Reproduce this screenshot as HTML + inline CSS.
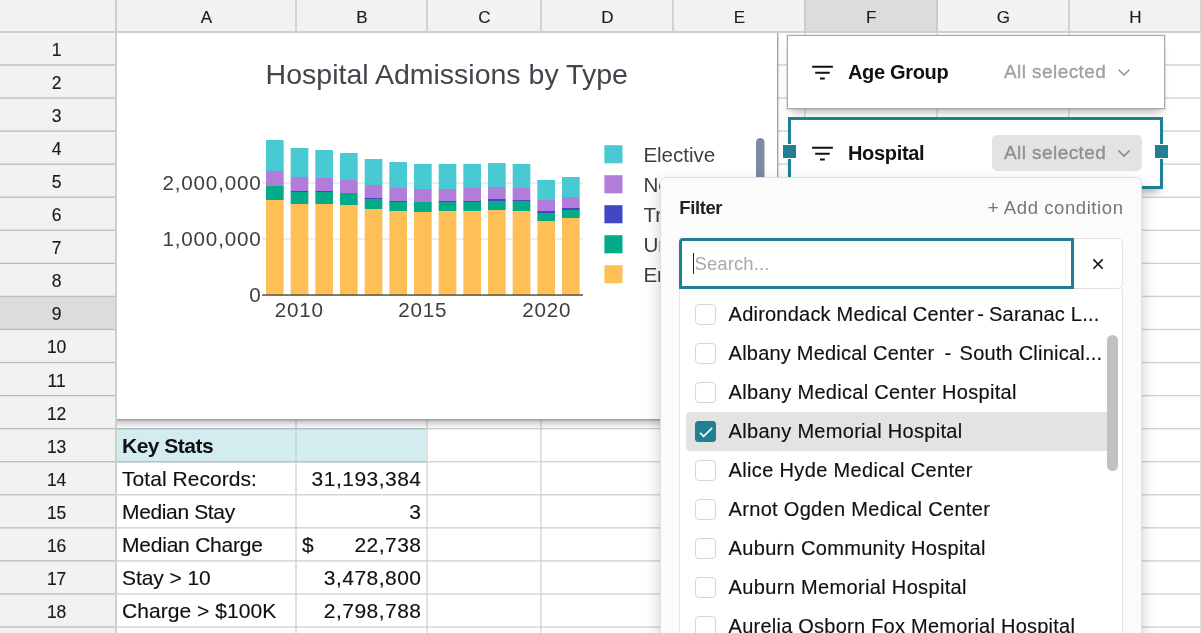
<!DOCTYPE html>
<html><head><meta charset="utf-8"><title>Hospital Admissions</title>
<style>
*{box-sizing:border-box;margin:0;padding:0}
html,body{width:1201px;height:633px;overflow:hidden;background:#fff;font-family:"Liberation Sans",sans-serif;color:#111}
#app{position:relative;width:1201px;height:633px;overflow:hidden;will-change:transform}
.t{position:absolute;white-space:pre;line-height:40px}
.vl{position:absolute;top:0;width:2px;height:633px;background:#e1e1e1}
.hl{position:absolute;left:0;height:2px;width:1201px;background:#e1e1e1}
.b{position:absolute}
.cb{position:absolute;left:695px;width:21px;height:21px;border:1px solid #d6d6d6;border-radius:4px;background:#fff}
</style></head><body><div id="app">

<div class="vl" style="left:295px;top:33px"></div>
<div class="vl" style="left:426px;top:33px"></div>
<div class="vl" style="left:540px;top:33px"></div>
<div class="vl" style="left:672px;top:33px"></div>
<div class="vl" style="left:804px;top:33px"></div>
<div class="vl" style="left:936px;top:33px"></div>
<div class="vl" style="left:1068px;top:33px"></div>
<div class="vl" style="left:1200px;top:33px"></div>
<svg class="b" style="left:0;top:0" width="1201" height="633">
<rect x="117" y="64.33" width="1084" height="1.333" fill="#d1d1d1"/>
<rect x="117" y="97.39" width="1084" height="1.333" fill="#d1d1d1"/>
<rect x="117" y="130.45" width="1084" height="1.333" fill="#d1d1d1"/>
<rect x="117" y="163.51" width="1084" height="1.333" fill="#d1d1d1"/>
<rect x="117" y="196.57" width="1084" height="1.333" fill="#d1d1d1"/>
<rect x="117" y="229.63" width="1084" height="1.333" fill="#d1d1d1"/>
<rect x="117" y="262.69" width="1084" height="1.333" fill="#d1d1d1"/>
<rect x="117" y="295.75" width="1084" height="1.333" fill="#d1d1d1"/>
<rect x="117" y="328.81" width="1084" height="1.333" fill="#d1d1d1"/>
<rect x="117" y="361.87" width="1084" height="1.333" fill="#d1d1d1"/>
<rect x="117" y="394.93" width="1084" height="1.333" fill="#d1d1d1"/>
<rect x="117" y="427.99" width="1084" height="1.333" fill="#d1d1d1"/>
<rect x="117" y="461.05" width="1084" height="1.333" fill="#d1d1d1"/>
<rect x="117" y="494.11" width="1084" height="1.333" fill="#d1d1d1"/>
<rect x="117" y="527.17" width="1084" height="1.333" fill="#d1d1d1"/>
<rect x="117" y="560.23" width="1084" height="1.333" fill="#d1d1d1"/>
<rect x="117" y="593.29" width="1084" height="1.333" fill="#d1d1d1"/>
<rect x="117" y="626.35" width="1084" height="1.333" fill="#d1d1d1"/>
</svg>
<svg class="b" style="left:0;top:0" width="1201" height="633"><rect x="117" y="427.99" width="309" height="34.39" fill="#d3ecf0"/><rect x="117" y="427.99" width="309" height="1.333" fill="rgba(0,0,0,.18)"/><rect x="117" y="461.05" width="309" height="1.333" fill="rgba(0,0,0,.18)"/></svg>
<div class="vl" style="left:295px;top:430px;height:31px;background:#c6dde1"></div>
<div class="t" style="left:122px;top:425.76px;font-size:21px;color:#111;-webkit-text-stroke:.15px #111;font-weight:700;-webkit-text-stroke:0;letter-spacing:-0.5px">Key Stats</div>
<div class="t" style="left:122px;top:458.82px;font-size:21px;color:#111;-webkit-text-stroke:.15px #111;letter-spacing:0.05px">Total Records:</div>
<div class="t" style="right:779.5px;top:458.82px;font-size:21px;color:#111;-webkit-text-stroke:.15px #111;letter-spacing:.48px">31,193,384</div>
<div class="t" style="left:122px;top:491.88px;font-size:21px;color:#111;-webkit-text-stroke:.15px #111;letter-spacing:-0.36px">Median Stay</div>
<div class="t" style="right:779.5px;top:491.88px;font-size:21px;color:#111;-webkit-text-stroke:.15px #111;letter-spacing:.48px">3</div>
<div class="t" style="left:122px;top:524.94px;font-size:21px;color:#111;-webkit-text-stroke:.15px #111;letter-spacing:-0.22px">Median Charge</div>
<div class="t" style="right:779.5px;top:524.94px;font-size:21px;color:#111;-webkit-text-stroke:.15px #111;letter-spacing:.48px">22,738</div>
<div class="t" style="left:122px;top:558px;font-size:21px;color:#111;-webkit-text-stroke:.15px #111;letter-spacing:-0.07px">Stay &gt; 10</div>
<div class="t" style="right:779.5px;top:558px;font-size:21px;color:#111;-webkit-text-stroke:.15px #111;letter-spacing:.48px">3,478,800</div>
<div class="t" style="left:122px;top:591.06px;font-size:21px;color:#111;-webkit-text-stroke:.15px #111;letter-spacing:0.05px">Charge &gt; $100K</div>
<div class="t" style="right:779.5px;top:591.06px;font-size:21px;color:#111;-webkit-text-stroke:.15px #111;letter-spacing:.48px">2,798,788</div>
<div class="t" style="left:302px;top:524.94px;font-size:21px;color:#111;-webkit-text-stroke:.15px #111;">$</div>
<div class="b" style="left:105px;top:20px;width:673px;height:400px;background:#fff;border:1px solid #a0a0a0;box-shadow:0 0 0 1px rgba(0,0,0,.1),0 7px 8px -4px rgba(0,0,0,.3)"></div>
<svg class="b" style="left:117px;top:33px" width="660" height="386" viewBox="117 33 660 386">
<rect x="262" y="182" width="321" height="2" fill="#ededed"/><rect x="262" y="238" width="321" height="2" fill="#ededed"/>
<rect x="266.00" y="140" width="17.67" height="31" fill="#49c9d1"/>
<rect x="266.00" y="171" width="17.67" height="15" fill="#b27cdb"/>
<rect x="266.00" y="186" width="17.67" height="14" fill="#03ab88"/>
<rect x="266.00" y="200" width="17.67" height="95" fill="#febf57"/>
<rect x="290.67" y="148" width="17.67" height="29" fill="#49c9d1"/>
<rect x="290.67" y="177" width="17.67" height="14" fill="#b27cdb"/>
<rect x="290.67" y="191" width="17.67" height="1" fill="#4447c4"/>
<rect x="290.67" y="192" width="17.67" height="12" fill="#03ab88"/>
<rect x="290.67" y="204" width="17.67" height="91" fill="#febf57"/>
<rect x="315.33" y="150" width="17.67" height="28" fill="#49c9d1"/>
<rect x="315.33" y="178" width="17.67" height="13" fill="#b27cdb"/>
<rect x="315.33" y="191" width="17.67" height="1" fill="#4447c4"/>
<rect x="315.33" y="192" width="17.67" height="12" fill="#03ab88"/>
<rect x="315.33" y="204" width="17.67" height="91" fill="#febf57"/>
<rect x="340.00" y="153" width="17.67" height="27" fill="#49c9d1"/>
<rect x="340.00" y="180" width="17.67" height="13" fill="#b27cdb"/>
<rect x="340.00" y="193" width="17.67" height="12" fill="#03ab88"/>
<rect x="340.00" y="205" width="17.67" height="90" fill="#febf57"/>
<rect x="364.67" y="159" width="17.67" height="26" fill="#49c9d1"/>
<rect x="364.67" y="185" width="17.67" height="13" fill="#b27cdb"/>
<rect x="364.67" y="198" width="17.67" height="1" fill="#4447c4"/>
<rect x="364.67" y="199" width="17.67" height="10" fill="#03ab88"/>
<rect x="364.67" y="209" width="17.67" height="86" fill="#febf57"/>
<rect x="389.34" y="162" width="17.67" height="26" fill="#49c9d1"/>
<rect x="389.34" y="188" width="17.67" height="13" fill="#b27cdb"/>
<rect x="389.34" y="201" width="17.67" height="1" fill="#4447c4"/>
<rect x="389.34" y="202" width="17.67" height="9" fill="#03ab88"/>
<rect x="389.34" y="211" width="17.67" height="84" fill="#febf57"/>
<rect x="414.00" y="164" width="17.67" height="25" fill="#49c9d1"/>
<rect x="414.00" y="189" width="17.67" height="13" fill="#b27cdb"/>
<rect x="414.00" y="202" width="17.67" height="10" fill="#03ab88"/>
<rect x="414.00" y="212" width="17.67" height="83" fill="#febf57"/>
<rect x="438.67" y="164" width="17.67" height="25" fill="#49c9d1"/>
<rect x="438.67" y="189" width="17.67" height="12" fill="#b27cdb"/>
<rect x="438.67" y="201" width="17.67" height="1" fill="#4447c4"/>
<rect x="438.67" y="202" width="17.67" height="9" fill="#03ab88"/>
<rect x="438.67" y="211" width="17.67" height="84" fill="#febf57"/>
<rect x="463.34" y="164" width="17.67" height="24" fill="#49c9d1"/>
<rect x="463.34" y="188" width="17.67" height="13" fill="#b27cdb"/>
<rect x="463.34" y="201" width="17.67" height="1" fill="#4447c4"/>
<rect x="463.34" y="202" width="17.67" height="9" fill="#03ab88"/>
<rect x="463.34" y="211" width="17.67" height="84" fill="#febf57"/>
<rect x="488.00" y="163" width="17.67" height="24" fill="#49c9d1"/>
<rect x="488.00" y="187" width="17.67" height="12" fill="#b27cdb"/>
<rect x="488.00" y="199" width="17.67" height="2" fill="#4447c4"/>
<rect x="488.00" y="201" width="17.67" height="9" fill="#03ab88"/>
<rect x="488.00" y="210" width="17.67" height="85" fill="#febf57"/>
<rect x="512.67" y="164" width="17.67" height="24" fill="#49c9d1"/>
<rect x="512.67" y="188" width="17.67" height="12" fill="#b27cdb"/>
<rect x="512.67" y="200" width="17.67" height="1" fill="#4447c4"/>
<rect x="512.67" y="201" width="17.67" height="10" fill="#03ab88"/>
<rect x="512.67" y="211" width="17.67" height="84" fill="#febf57"/>
<rect x="537.34" y="180" width="17.67" height="20" fill="#49c9d1"/>
<rect x="537.34" y="200" width="17.67" height="11" fill="#b27cdb"/>
<rect x="537.34" y="211" width="17.67" height="2" fill="#4447c4"/>
<rect x="537.34" y="213" width="17.67" height="8" fill="#03ab88"/>
<rect x="537.34" y="221" width="17.67" height="74" fill="#febf57"/>
<rect x="562.00" y="177" width="17.67" height="20" fill="#49c9d1"/>
<rect x="562.00" y="197" width="17.67" height="11" fill="#b27cdb"/>
<rect x="562.00" y="208" width="17.67" height="2" fill="#4447c4"/>
<rect x="562.00" y="210" width="17.67" height="8" fill="#03ab88"/>
<rect x="562.00" y="218" width="17.67" height="77" fill="#febf57"/>
<rect x="262" y="294.4" width="321" height="1.3" fill="#3a3a3a"/>
<rect x="604.4" y="145.2" width="18.1" height="18.1" fill="#49c9d1"/>
<rect x="604.4" y="175.2" width="18.1" height="18.1" fill="#b27cdb"/>
<rect x="604.4" y="205.2" width="18.1" height="18.1" fill="#4447c4"/>
<rect x="604.4" y="235.2" width="18.1" height="18.1" fill="#03ab88"/>
<rect x="604.4" y="265.2" width="18.1" height="18.1" fill="#febf57"/>
<rect x="756" y="138" width="8.5" height="120" rx="4.2" fill="#7f89a4"/>
</svg>
<div class="t" style="left:265.6px;top:53.8px;font-size:28.5px;color:#41464d;letter-spacing:0px">Hospital Admissions by Type</div>
<div class="t" style="right:939.5px;top:162.5px;font-size:20.6px;color:#3e3e3e;letter-spacing:.82px">2,000,000</div>
<div class="t" style="right:939.5px;top:218.5px;font-size:20.6px;color:#3e3e3e;letter-spacing:.82px">1,000,000</div>
<div class="t" style="right:939.5px;top:274.5px;font-size:20.6px;color:#3e3e3e;letter-spacing:.82px">0</div>
<div class="t" style="left:149.2px;width:300px;text-align:center;top:289.8px;font-size:20.6px;color:#3e3e3e;letter-spacing:.82px">2010</div>
<div class="t" style="left:272.8px;width:300px;text-align:center;top:289.8px;font-size:20.6px;color:#3e3e3e;letter-spacing:.82px">2015</div>
<div class="t" style="left:396.79999999999995px;width:300px;text-align:center;top:289.8px;font-size:20.6px;color:#3e3e3e;letter-spacing:.82px">2020</div>
<div class="t" style="left:643.4px;top:134.5px;font-size:20.6px;color:#3e3e3e;letter-spacing:-.05px">Elective</div>
<div class="t" style="left:643.4px;top:164.5px;font-size:20.6px;color:#3e3e3e;letter-spacing:-.05px">Newborn</div>
<div class="t" style="left:643.4px;top:194.5px;font-size:20.6px;color:#3e3e3e;letter-spacing:-.05px">Trauma</div>
<div class="t" style="left:643.4px;top:224.5px;font-size:20.6px;color:#3e3e3e;letter-spacing:-.05px">Urgent</div>
<div class="t" style="left:643.4px;top:254.5px;font-size:20.6px;color:#3e3e3e;letter-spacing:-.05px">Emergency</div>
<div class="b" style="left:0;top:0;width:1201px;height:32px;background:#f2f2f2"></div>
<div class="b" style="left:0;top:0;width:116px;height:633px;background:#f2f2f2"></div>
<div class="b" style="left:806px;top:0;width:130px;height:32px;background:#dcdcdc"></div>
<svg class="b" style="left:0;top:0" width="116" height="633"><rect x="0" y="296.42" width="116" height="33.06" fill="#dcdcdc"/></svg>
<div class="vl" style="left:295px;height:32px;background:#d2d2d2"></div>
<div class="vl" style="left:426px;height:32px;background:#d2d2d2"></div>
<div class="vl" style="left:540px;height:32px;background:#d2d2d2"></div>
<div class="vl" style="left:672px;height:32px;background:#d2d2d2"></div>
<div class="vl" style="left:804px;height:32px;background:#cbcbcb"></div>
<div class="vl" style="left:936px;height:32px;background:#cbcbcb"></div>
<div class="vl" style="left:1068px;height:32px;background:#d2d2d2"></div>
<div class="vl" style="left:1200px;height:32px;background:#d2d2d2"></div>
<svg class="b" style="left:0;top:0" width="116" height="633">
<rect x="0" y="64.33" width="116" height="1.333" fill="#bdbdbd"/>
<rect x="0" y="97.39" width="116" height="1.333" fill="#bdbdbd"/>
<rect x="0" y="130.45" width="116" height="1.333" fill="#bdbdbd"/>
<rect x="0" y="163.51" width="116" height="1.333" fill="#bdbdbd"/>
<rect x="0" y="196.57" width="116" height="1.333" fill="#bdbdbd"/>
<rect x="0" y="229.63" width="116" height="1.333" fill="#bdbdbd"/>
<rect x="0" y="262.69" width="116" height="1.333" fill="#bdbdbd"/>
<rect x="0" y="295.75" width="116" height="1.333" fill="#bdbdbd"/>
<rect x="0" y="328.81" width="116" height="1.333" fill="#bdbdbd"/>
<rect x="0" y="361.87" width="116" height="1.333" fill="#bdbdbd"/>
<rect x="0" y="394.93" width="116" height="1.333" fill="#bdbdbd"/>
<rect x="0" y="427.99" width="116" height="1.333" fill="#bdbdbd"/>
<rect x="0" y="461.05" width="116" height="1.333" fill="#bdbdbd"/>
<rect x="0" y="494.11" width="116" height="1.333" fill="#bdbdbd"/>
<rect x="0" y="527.17" width="116" height="1.333" fill="#bdbdbd"/>
<rect x="0" y="560.23" width="116" height="1.333" fill="#bdbdbd"/>
<rect x="0" y="593.29" width="116" height="1.333" fill="#bdbdbd"/>
<rect x="0" y="626.35" width="116" height="1.333" fill="#bdbdbd"/>
</svg>
<div class="vl" style="left:115px;background:#cfcfcf"></div>
<div class="hl" style="top:31px;background:#cfcfcf"></div>
<div class="t" style="left:56.30000000000001px;width:300px;text-align:center;top:-2.5px;font-size:17px;color:#1c1c1c;-webkit-text-stroke:.15px #1c1c1c;">A</div>
<div class="t" style="left:211.8px;width:300px;text-align:center;top:-2.5px;font-size:17px;color:#1c1c1c;-webkit-text-stroke:.15px #1c1c1c;">B</div>
<div class="t" style="left:334.3px;width:300px;text-align:center;top:-2.5px;font-size:17px;color:#1c1c1c;-webkit-text-stroke:.15px #1c1c1c;">C</div>
<div class="t" style="left:457.29999999999995px;width:300px;text-align:center;top:-2.5px;font-size:17px;color:#1c1c1c;-webkit-text-stroke:.15px #1c1c1c;">D</div>
<div class="t" style="left:589.3px;width:300px;text-align:center;top:-2.5px;font-size:17px;color:#1c1c1c;-webkit-text-stroke:.15px #1c1c1c;">E</div>
<div class="t" style="left:721.3px;width:300px;text-align:center;top:-2.5px;font-size:17px;color:#1c1c1c;-webkit-text-stroke:.15px #1c1c1c;">F</div>
<div class="t" style="left:853.3px;width:300px;text-align:center;top:-2.5px;font-size:17px;color:#1c1c1c;-webkit-text-stroke:.15px #1c1c1c;">G</div>
<div class="t" style="left:985.3px;width:300px;text-align:center;top:-2.5px;font-size:17px;color:#1c1c1c;-webkit-text-stroke:.15px #1c1c1c;">H</div>
<div class="t" style="left:-93.4px;width:300px;text-align:center;top:30px;font-size:17.5px;color:#1c1c1c;-webkit-text-stroke:.15px #1c1c1c;">1</div>
<div class="t" style="left:-93.4px;width:300px;text-align:center;top:63px;font-size:17.5px;color:#1c1c1c;-webkit-text-stroke:.15px #1c1c1c;">2</div>
<div class="t" style="left:-93.4px;width:300px;text-align:center;top:96.06px;font-size:17.5px;color:#1c1c1c;-webkit-text-stroke:.15px #1c1c1c;">3</div>
<div class="t" style="left:-93.4px;width:300px;text-align:center;top:129.12px;font-size:17.5px;color:#1c1c1c;-webkit-text-stroke:.15px #1c1c1c;">4</div>
<div class="t" style="left:-93.4px;width:300px;text-align:center;top:162.18px;font-size:17.5px;color:#1c1c1c;-webkit-text-stroke:.15px #1c1c1c;">5</div>
<div class="t" style="left:-93.4px;width:300px;text-align:center;top:195.24px;font-size:17.5px;color:#1c1c1c;-webkit-text-stroke:.15px #1c1c1c;">6</div>
<div class="t" style="left:-93.4px;width:300px;text-align:center;top:228.3px;font-size:17.5px;color:#1c1c1c;-webkit-text-stroke:.15px #1c1c1c;">7</div>
<div class="t" style="left:-93.4px;width:300px;text-align:center;top:261.36px;font-size:17.5px;color:#1c1c1c;-webkit-text-stroke:.15px #1c1c1c;">8</div>
<div class="t" style="left:-93.4px;width:300px;text-align:center;top:294.42px;font-size:17.5px;color:#1c1c1c;-webkit-text-stroke:.15px #1c1c1c;">9</div>
<div class="t" style="left:-93.4px;width:300px;text-align:center;top:327.48px;font-size:17.5px;color:#1c1c1c;-webkit-text-stroke:.15px #1c1c1c;">10</div>
<div class="t" style="left:-93.4px;width:300px;text-align:center;top:360.54px;font-size:17.5px;color:#1c1c1c;-webkit-text-stroke:.15px #1c1c1c;">11</div>
<div class="t" style="left:-93.4px;width:300px;text-align:center;top:393.6px;font-size:17.5px;color:#1c1c1c;-webkit-text-stroke:.15px #1c1c1c;">12</div>
<div class="t" style="left:-93.4px;width:300px;text-align:center;top:426.66px;font-size:17.5px;color:#1c1c1c;-webkit-text-stroke:.15px #1c1c1c;">13</div>
<div class="t" style="left:-93.4px;width:300px;text-align:center;top:459.72px;font-size:17.5px;color:#1c1c1c;-webkit-text-stroke:.15px #1c1c1c;">14</div>
<div class="t" style="left:-93.4px;width:300px;text-align:center;top:492.78px;font-size:17.5px;color:#1c1c1c;-webkit-text-stroke:.15px #1c1c1c;">15</div>
<div class="t" style="left:-93.4px;width:300px;text-align:center;top:525.84px;font-size:17.5px;color:#1c1c1c;-webkit-text-stroke:.15px #1c1c1c;">16</div>
<div class="t" style="left:-93.4px;width:300px;text-align:center;top:558.9px;font-size:17.5px;color:#1c1c1c;-webkit-text-stroke:.15px #1c1c1c;">17</div>
<div class="t" style="left:-93.4px;width:300px;text-align:center;top:591.96px;font-size:17.5px;color:#1c1c1c;-webkit-text-stroke:.15px #1c1c1c;">18</div>
<div class="b" style="left:787px;top:35px;width:378px;height:74px;background:#fff;border:1px solid #a8a8a8;box-shadow:0 0 0 1px rgba(0,0,0,.08),0 7px 8px -4px rgba(0,0,0,.3)"></div>
<svg class="b" style="left:810px;top:64px" width="26" height="18" viewBox="0 0 26 18"><path d="M2.1 2.75H22.9M5.2 8.7H19.7M10 14.55H14.8" stroke="#111" stroke-width="2.1" fill="none"/></svg>
<div class="t" style="left:848px;top:52px;font-size:20px;font-weight:700;letter-spacing:-.33px;color:#111">Age Group</div>
<div class="t" style="left:1004px;top:51.5px;font-size:19px;letter-spacing:.43px;color:#a0a0a0;-webkit-text-stroke:.35px #a0a0a0">All selected</div>
<svg class="b" style="left:1117px;top:68px" width="14" height="9" viewBox="0 0 14 9"><path d="M1.5 1.5 L7 7 L12.5 1.5" fill="none" stroke="#9a9a9a" stroke-width="1.65"/></svg>
<div class="b" style="left:788px;top:117px;width:375px;height:72px;background:#fff;border:3px solid #1f8094;box-shadow:0 7px 8px -4px rgba(0,0,0,.3)"></div>
<div class="b" style="left:782px;top:144px;width:15px;height:15px;background:#1f8094;border:1px solid #fff"></div>
<div class="b" style="left:1154px;top:144px;width:15px;height:15px;background:#1f8094;border:1px solid #fff"></div>
<svg class="b" style="left:810px;top:145px" width="26" height="18" viewBox="0 0 26 18"><path d="M2.1 2.75H22.9M5.2 8.7H19.7M10 14.55H14.8" stroke="#111" stroke-width="2.1" fill="none"/></svg>
<div class="t" style="left:848px;top:133px;font-size:20px;font-weight:700;letter-spacing:-.33px;color:#111">Hospital</div>
<div class="b" style="left:992px;top:135px;width:150px;height:36px;background:#e3e3e3;border-radius:5px"></div>
<div class="t" style="left:1004px;top:132.5px;font-size:19px;letter-spacing:.43px;color:#8f8f8f;-webkit-text-stroke:.35px #8f8f8f">All selected</div>
<svg class="b" style="left:1117px;top:149px" width="14" height="9" viewBox="0 0 14 9"><path d="M1.5 1.5 L7 7 L12.5 1.5" fill="none" stroke="#8a8a8a" stroke-width="1.65"/></svg>
<div class="b" style="left:660px;top:177px;width:482px;height:480px;background:#fbfbfb;border:1px solid #dfdfdf;border-radius:6px;box-shadow:0 6px 16px rgba(0,0,0,.2)"></div>
<div class="t" style="left:679.3px;top:188.3px;font-size:18.5px;font-weight:700;color:#222;letter-spacing:-.4px">Filter</div>
<div class="t" style="right:77.5px;top:188.3px;font-size:18.5px;color:#757575;letter-spacing:.58px">+ Add condition</div>
<div class="b" style="left:679px;top:238px;width:444px;height:51px;background:#fff;border:1px solid #e0e0e0;border-radius:5px"></div>
<div class="b" style="left:679px;top:238px;width:395px;height:51px;background:#fff;border:3px solid #1f8094;border-radius:4px 0 0 0"></div>
<div class="b" style="left:693px;top:253px;width:1.3px;height:21px;background:#222"></div>
<div class="t" style="left:694.5px;top:243.5px;font-size:18.5px;color:#a9a9a9;letter-spacing:.1px">Search...</div>
<svg class="b" style="left:1092px;top:258px" width="12" height="12" viewBox="0 0 12 12"><path d="M1.4 1.4 L10.7 10.7 M10.7 1.4 L1.4 10.7" stroke="#111" stroke-width="1.55" fill="none"/></svg>
<div class="b" style="left:679px;top:289px;width:444px;height:360px;background:#fff;border:1px solid #e4e4e4;border-top:none"></div>
<div class="b" style="left:686px;top:412px;width:426px;height:39px;background:#e3e3e3;border-radius:4px"></div>
<div class="cb" style="top:304px"></div>
<div class="t li" style="left:728.6px;top:293.8px;font-size:20px;color:#111;-webkit-text-stroke:.15px #111;letter-spacing:0.218px">Adirondack Medical Center<span style="margin:0 5px 0 3px">-</span>Saranac L...</div>
<div class="cb" style="top:343px"></div>
<div class="t li" style="left:728.6px;top:332.8px;font-size:20px;color:#111;-webkit-text-stroke:.15px #111;letter-spacing:0.216px">Albany Medical Center <span style="margin:0 2.4px 0 4.4px">-</span> South Clinical...</div>
<div class="cb" style="top:382px"></div>
<div class="t li" style="left:728.6px;top:371.8px;font-size:20px;color:#111;-webkit-text-stroke:.15px #111;letter-spacing:0.302px">Albany Medical Center Hospital</div>
<div class="cb" style="top:421px;background:#1f8094;border-color:#1f8094;border-radius:3px"><svg class="b" style="left:-1px;top:-1px" width="21" height="21" viewBox="0 0 21 21"><path d="M5.1 11.9 L8.6 15.4 L17.2 6.9" fill="none" stroke="#fff" stroke-width="1.5"/></svg></div>
<div class="t li" style="left:728.6px;top:410.8px;font-size:20px;color:#111;-webkit-text-stroke:.15px #111;letter-spacing:0.297px">Albany Memorial Hospital</div>
<div class="cb" style="top:460px"></div>
<div class="t li" style="left:728.6px;top:449.8px;font-size:20px;color:#111;-webkit-text-stroke:.15px #111;letter-spacing:0.343px">Alice Hyde Medical Center</div>
<div class="cb" style="top:499px"></div>
<div class="t li" style="left:728.6px;top:488.8px;font-size:20px;color:#111;-webkit-text-stroke:.15px #111;letter-spacing:0.309px">Arnot Ogden Medical Center</div>
<div class="cb" style="top:538px"></div>
<div class="t li" style="left:728.6px;top:527.8px;font-size:20px;color:#111;-webkit-text-stroke:.15px #111;letter-spacing:0.329px">Auburn Community Hospital</div>
<div class="cb" style="top:577px"></div>
<div class="t li" style="left:728.6px;top:566.8px;font-size:20px;color:#111;-webkit-text-stroke:.15px #111;letter-spacing:0.339px">Auburn Memorial Hospital</div>
<div class="cb" style="top:616px"></div>
<div class="t li" style="left:728.6px;top:605.8px;font-size:20px;color:#111;-webkit-text-stroke:.15px #111;letter-spacing:0.24px">Aurelia Osborn Fox Memorial Hospital</div>
<div class="b" style="left:1107px;top:335px;width:11px;height:136px;background:#c1c1c1;border-radius:5.5px"></div>
</div></body></html>
